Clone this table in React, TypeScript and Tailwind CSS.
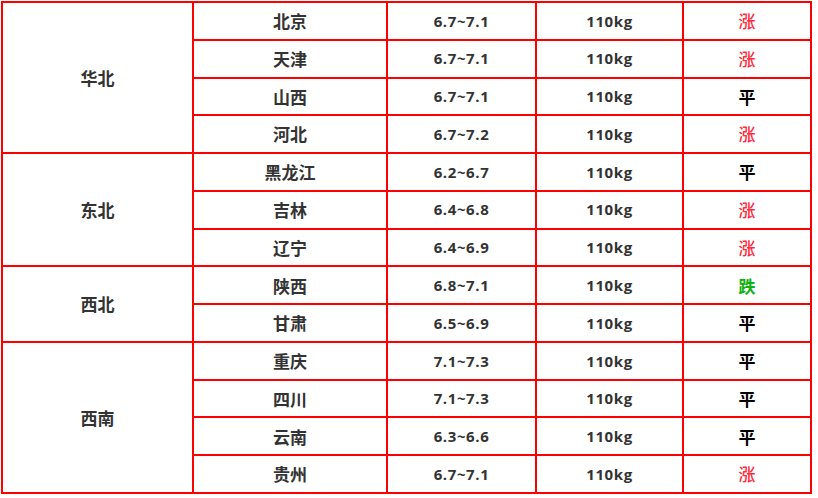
import { Fragment } from 'react';

const groups = [
  {
    name: '华北',
    rows: [
      ['北京', '6.7~7.1', '涨'],
      ['天津', '6.7~7.1', '涨'],
      ['山西', '6.7~7.1', '平'],
      ['河北', '6.7~7.2', '涨'],
    ],
  },
  {
    name: '东北',
    rows: [
      ['黑龙江', '6.2~6.7', '平'],
      ['吉林', '6.4~6.8', '涨'],
      ['辽宁', '6.4~6.9', '涨'],
    ],
  },
  {
    name: '西北',
    rows: [
      ['陕西', '6.8~7.1', '跌'],
      ['甘肃', '6.5~6.9', '平'],
    ],
  },
  {
    name: '西南',
    rows: [
      ['重庆', '7.1~7.3', '平'],
      ['四川', '7.1~7.3', '平'],
      ['云南', '6.3~6.6', '平'],
      ['贵州', '6.7~7.1', '涨'],
    ],
  },
];

const spanClass: Record<number, string> = {
  2: 'row-span-2',
  3: 'row-span-3',
  4: 'row-span-4',
};

function trendColor(t: string) {
  if (t === '涨') return 'text-[#ff2a3a] font-medium';
  if (t === '跌') return 'text-[#10b010] font-bold';
  return 'text-black font-bold';
}

export default function App() {
  const cell = 'bg-white flex items-center justify-center';
  const cjk = "font-['Noto_Sans_CJK_SC',sans-serif]";
  const num = "font-['Open_Sans','Noto_Sans_CJK_SC',sans-serif]";

  return (
    <div className="w-[818px] h-[498px] bg-white">
      <div className="ml-[1px] mt-[1px] w-[811px] h-[493px] bg-[#ff0000] p-[2px] grid grid-cols-[189px_192px_147px_145px_126px] grid-rows-[repeat(13,minmax(0,1fr))] gap-[2px]">
        {groups.map((g) => (
          <Fragment key={g.name}>
            <div className={`${cell} ${spanClass[g.rows.length]} ${cjk} text-[17px] font-bold text-[#333]`}>
              {g.name}
            </div>
            {g.rows.map(([prov, price, trend]) => (
              <Fragment key={prov}>
                <div className={`${cell} col-start-2 ${cjk} text-[17px] font-bold text-[#333]`}>
                  {prov}
                </div>
                <div className={`${cell} ${num} text-[15px] tracking-[0.6px] font-bold text-[#333]`}>
                  {price}
                </div>
                <div className={`${cell} ${num} text-[15px] tracking-[0.6px] font-bold text-[#333]`}>
                  110kg
                </div>
                <div className={`${cell} ${cjk} text-[17px] ${trendColor(trend)}`}>
                  {trend}
                </div>
              </Fragment>
            ))}
          </Fragment>
        ))}
      </div>
    </div>
  );
}
